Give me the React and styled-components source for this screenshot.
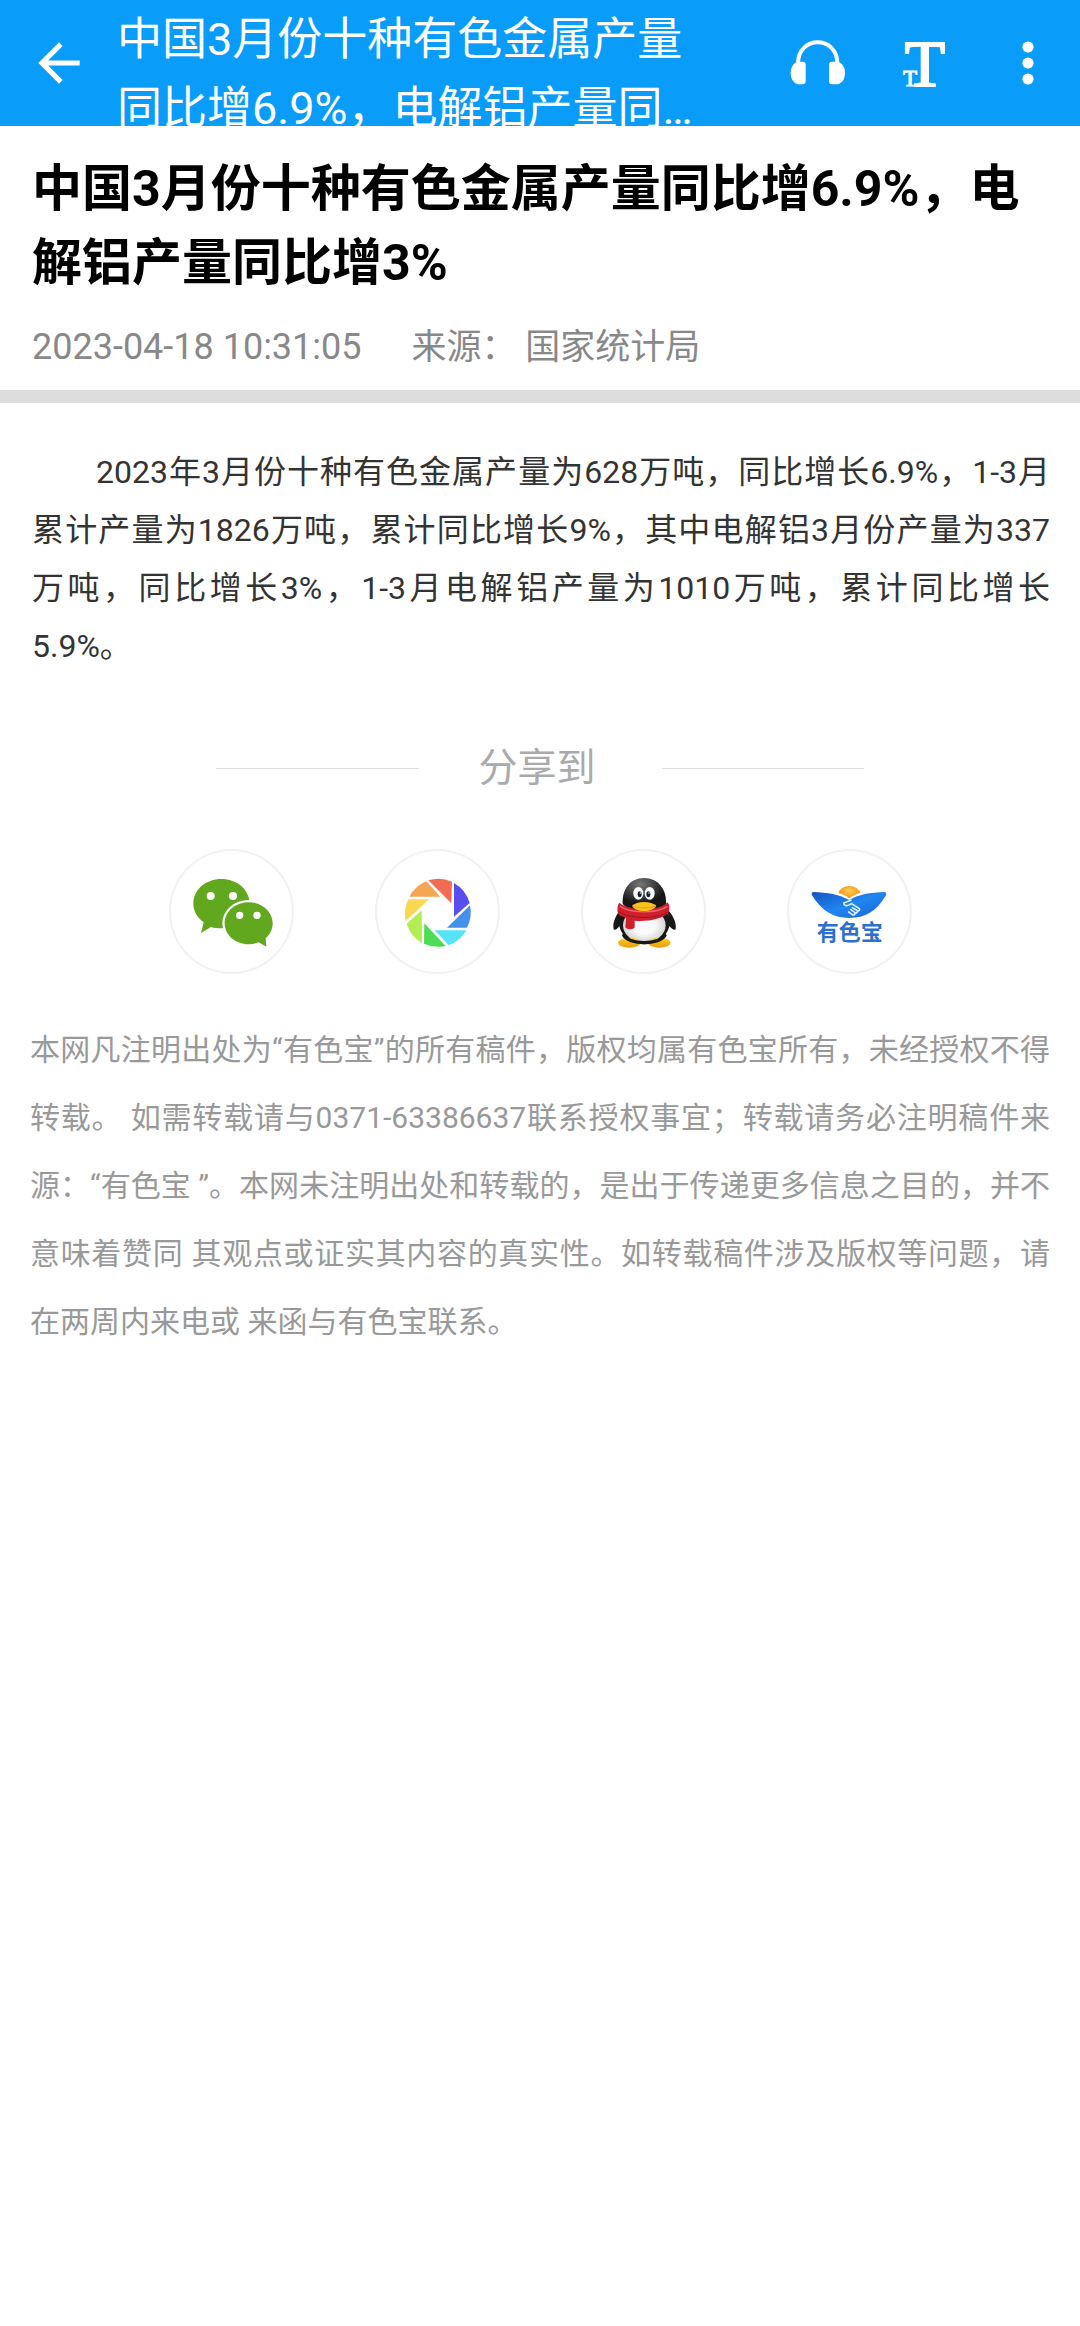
import React from "react";
import styled, { createGlobalStyle, css } from "styled-components";

const GlobalStyle = createGlobalStyle`
  body {
    margin: 0;
    background: #fff;
    font-family: Roboto, "Noto Sans CJK SC", sans-serif;
  }
`;

const Header = styled.header`
  display: flex;
  height: 126px;
  overflow: hidden;
  background: #0a9cf9;
  color: #fff;
`;

const IconButton = styled.button`
  display: flex;
  flex: none;
  align-items: center;
  justify-content: center;
  width: 105px;
  padding: 0;
  border: none;
  background: none;
  color: inherit;
  cursor: pointer;
  ${props =>
    props.$back &&
    css`
      width: 117px;
    `}
`;

const HeaderTitle = styled.div`
  flex: 1;
  align-self: flex-start;
  display: -webkit-box;
  -webkit-box-orient: vertical;
  -webkit-line-clamp: 2;
  overflow: hidden;
  margin: 5px 56px 0 0;
  font-size: 45px;
  line-height: 69px;
`;

const ArticleHead = styled.div`
  padding: 26px 30px 17px 32px;
  border-bottom: 13px solid #ddd;
`;

const Headline = styled.h1`
  margin: 0;
  color: #000;
  font-size: 50px;
  font-weight: bold;
  line-height: 74px;
`;

const Meta = styled.div`
  display: flex;
  align-items: baseline;
  gap: 50px;
  height: 52px;
  margin-top: 21px;
  color: #888;
  font-size: 35px;
  line-height: 52px;
`;

const PublishTime = styled.time`
  font-size: 36px;
`;

const Content = styled.p`
  margin: 0;
  padding: 40px 30px 0 32px;
  color: #333;
  font-size: 32px;
  line-height: 58px;
  text-align: justify;
`;

const ContentRun = styled.span`
  display: block;
  ${props =>
    props.$first &&
    css`
      text-align-last: justify;
      text-indent: 2em;
    `}
`;

const ShareTitle = styled.div`
  display: flex;
  align-items: center;
  width: 60%;
  margin: 65px auto 0;
  color: #aaa;
  font-size: 39px;
  line-height: 56px;
  &::before,
  &::after {
    content: "";
    flex: 1;
    height: 1px;
    background: #ddd;
  }
`;

const ShareLabel = styled.span`
  padding: 0 66px 0 60px;
`;

const ShareList = styled.div`
  display: flex;
  justify-content: center;
  gap: 81px;
  margin-top: 53px;
`;

const ShareButton = styled.button`
  width: 125px;
  height: 125px;
  padding: 0;
  border: none;
  border-radius: 50%;
  background: #fff;
  box-shadow: inset 0 0 0 2px #f2f0f1;
  cursor: pointer;
  svg {
    display: block;
  }
`;

const Disclaimer = styled.p`
  margin: 0;
  padding: 42px 30px 40px;
  color: #999;
  font-size: 30px;
  line-height: 68px;
  text-align: justify;
`;

const TITLE = "中国3月份十种有色金属产量同比增6.9%，电解铝产量同比增3%";

const BackIcon = () => (
  <svg width="62" height="62" viewBox="0 0 24 24" fill="currentColor">
    <path d="M20 11H7.83l5.59-5.59L12 4l-8 8 8 8 1.41-1.41L7.83 13H20v-2z" />
  </svg>
);

const HeadphonesIcon = () => (
  <svg width="56" height="46" viewBox="90 122 168 138" fill="currentColor">
    <path
      d="M114 192C114 108 232 108 232 192"
      fill="none"
      stroke="currentColor"
      strokeWidth="12"
    />
    <path d="M118 187h10q9 0 9 9v50q0 9-9 9h-10c-14 0-26-13-26-34s12-34 26-34z" />
    <path d="M229 187h-13q-9 0-9 9v50q0 9 9 9h13c14 0 26-13 26-34s-12-34-26-34z" />
  </svg>
);

const FontSizeIcon = () => (
  <svg
    width="44"
    height="50"
    viewBox="0 0 44 50"
    overflow="visible"
    fill="currentColor"
    stroke="currentColor"
    fontFamily="'Liberation Serif', serif"
  >
    <text x="24" y="48" fontSize="66" strokeWidth="2" textAnchor="middle">
      T
    </text>
    <text x="9" y="48" fontSize="23" strokeWidth="1" textAnchor="middle">
      T
    </text>
  </svg>
);

const MoreIcon = () => (
  <svg width="12" height="46" viewBox="0 0 12 46" fill="currentColor">
    <circle cx="6" cy="7" r="5.6" />
    <circle cx="6" cy="23" r="5.6" />
    <circle cx="6" cy="39" r="5.6" />
  </svg>
);

const WechatIcon = () => (
  <svg width="125" height="125" viewBox="30 24 375 375">
    <path
      fill="#62a81f"
      d="M187 114c47 0 85 32 85 74s-38 74-85 74c-11 0-21-1-31-4l-30 18 8-32c-19-14-31-34-31-56 0-42 37-74 84-74z"
    />
    <path
      fill="#62a81f"
      stroke="#fff"
      strokeWidth="14"
      paintOrder="stroke"
      d="M269 184c40 0 72 28 72 63 0 18-8 34-21 45l2 25-23-13c-9 4-19 6-30 6-40 0-72-28-72-63s32-63 72-63z"
    />
    <g fill="#fff">
      <circle cx="155" cy="165" r="12" />
      <circle cx="222" cy="165" r="12" />
      <circle cx="242" cy="223" r="11" />
      <circle cx="294" cy="223" r="11" />
    </g>
  </svg>
);

const MomentsIcon = () => (
  <svg width="125" height="125" viewBox="33 24 375 375">
    <path fill="#f26c54" d="M193 118A101 101 0 0 1 264 122L262 187Z" />
    <path fill="#5a4df0" d="M270 126A101 101 0 0 1 317 186L270 227Z" />
    <path fill="#4590ea" d="M318 193A101 101 0 0 1 309 260L249 260Z" />
    <path fill="#55e3f6" d="M307 268A101 101 0 0 1 254 313L212 268Z" />
    <path fill="#4edc55" d="M245 315A101 101 0 0 1 180 308L181 247Z" />
    <path fill="#b2ee50" d="M174 306A101 101 0 0 1 128 248L173 208Z" />
    <path fill="#f8d850" d="M125 240A101 101 0 0 1 133 175L195 175Z" />
    <path fill="#f3a653" d="M136 167A101 101 0 0 1 187 121L229 167Z" />
  </svg>
);

const QQIcon = () => (
  <svg width="125" height="125" viewBox="35 24 375 375">
    <defs>
      <radialGradient id="qqHead" cx="0.4" cy="0.2" r="0.6">
        <stop offset="0" stopColor="#777" />
        <stop offset="1" stopColor="#161616" />
      </radialGradient>
      <radialGradient id="qqBelly">
        <stop offset="0.5" stopColor="#fafafa" />
        <stop offset="1" stopColor="#d5d5d5" />
      </radialGradient>
      <linearGradient id="qqFoot" x1="0" y1="0" x2="0" y2="1">
        <stop offset="0" stopColor="#f9d31c" />
        <stop offset="1" stopColor="#eb9a12" />
      </linearGradient>
    </defs>
    <path fill="#181818" d="M152 208c-14 18-23 38-19 57 4 5 14-5 21-14zM296 208c16 16 26 38 23 57-4 5-15-4-22-13z" />
    <ellipse cx="225" cy="244" rx="76" ry="66" fill="#181818" />
    <ellipse cx="225" cy="253" rx="64" ry="51" fill="url(#qqBelly)" />
    <ellipse cx="180" cy="305" rx="34" ry="15" fill="url(#qqFoot)" />
    <ellipse cx="270" cy="305" rx="34" ry="15" fill="url(#qqFoot)" />
    <path fill="#181818" d="M162 274c12 35 112 35 126 0l4 10c-18 34-116 34-134 0z" />
    <path
      fill="url(#qqHead)"
      d="M224 111c42 0 68 34 66 76-6 26-126 26-130 0-2-42 22-76 64-76z"
    />
    <path
      fill="#cf1f2c"
      d="M150 185c26 25 122 27 144-1 8 7 8 24 2 33-22 20-66 25-100 22v20c-1 8-25 8-28 0l2-28c-12-4-20-8-24-14-3-10-2-25 4-32z"
    />
    <path fill="none" stroke="#981420" strokeWidth="3" d="M148 212c30 22 112 24 148 2" />
    <path fill="none" stroke="#ee6a70" strokeWidth="4" d="M152 196c30 22 110 22 142 0" />
    <ellipse cx="207" cy="157" rx="15" ry="19" fill="#fff" />
    <ellipse cx="241" cy="157" rx="15" ry="19" fill="#fff" />
    <ellipse cx="211" cy="160" rx="6" ry="9" fill="#14213a" />
    <ellipse cx="237" cy="160" rx="6" ry="9" fill="#14213a" />
    <circle cx="213" cy="156" r="2" fill="#fff" />
    <circle cx="239" cy="156" r="2" fill="#fff" />
    <path
      fill="#fbc31b"
      d="M188 194c8-6 20-11 36-11s29 5 37 11c-3 9-20 16-37 16s-33-7-36-16z"
    />
    <path fill="none" stroke="#d98a10" strokeWidth="2" d="M192 196c20 6 44 6 65 0" />
  </svg>
);

const YousebaoIcon = () => (
  <svg width="125" height="125" viewBox="36 24 375 375">
    <defs>
      <radialGradient id="ysbSun" cx="0.5" cy="0.4" r="0.6">
        <stop offset="0" stopColor="#ffd25a" />
        <stop offset="1" stopColor="#f48a08" />
      </radialGradient>
      <linearGradient id="ysbBoat" x1="0" y1="0" x2="1" y2="1">
        <stop offset="0" stopColor="#1454c4" />
        <stop offset="0.5" stopColor="#2086f2" />
        <stop offset="1" stopColor="#1b62d6" />
      </linearGradient>
    </defs>
    <path fill="url(#ysbSun)" d="M190 156c4-12 17-21 33-21s30 9 33 21c-14 4-24 8-33 16-9-8-20-12-33-16z" />
    <path
      fill="url(#ysbBoat)"
      d="M114 153c42 1 82 8 108 24 26-16 66-23 107-24q7 2 4 10c-28 48-62 68-110 68s-82-20-112-68q-3-8 3-10z"
    />
    <path
      fill="none"
      stroke="#d8f0ff"
      strokeWidth="5"
      strokeLinecap="round"
      strokeLinejoin="round"
      d="M228 178c-6 2-14 6-22 8 0 8 9 11 19 4l5-2 22 14c5 5-1 10-6 6l-14-8M246 208c4 6-2 10-7 6l-12-8M239 215c3 6-3 9-8 5l-10-7"
    />
    <text
      x="224"
      y="298"
      fill="#2a70cc"
      fontFamily="'Noto Sans CJK SC', sans-serif"
      fontSize="66"
      fontWeight="bold"
      textAnchor="middle"
    >
      有色宝
    </text>
  </svg>
);

const SHARE_TARGETS = [
  { name: "微信", Icon: WechatIcon },
  { name: "朋友圈", Icon: MomentsIcon },
  { name: "QQ", Icon: QQIcon },
  { name: "有色宝", Icon: YousebaoIcon }
];

const App = () => (
  <>
    <GlobalStyle />
    <Header>
      <IconButton $back aria-label="返回">
        <BackIcon />
      </IconButton>
      <HeaderTitle>{TITLE}</HeaderTitle>
      <IconButton aria-label="收听">
        <HeadphonesIcon />
      </IconButton>
      <IconButton aria-label="字体大小">
        <FontSizeIcon />
      </IconButton>
      <IconButton aria-label="更多">
        <MoreIcon />
      </IconButton>
    </Header>
    <main lang="zh-CN">
      <ArticleHead>
        <Headline>{TITLE}</Headline>
        <Meta>
          <PublishTime>2023-04-18 10:31:05</PublishTime>
          <span>来源： 国家统计局</span>
        </Meta>
      </ArticleHead>
      <Content>
        <ContentRun $first>
          2023年3月份十种有色金属产量为628万吨，同比增长6.9%，1-3月累计产量为1826万吨，累计同比增长9%，其中电解铝3月份产量为337
        </ContentRun>
        <ContentRun>
          万吨，同比增长3%，1-3月电解铝产量为1010万吨，累计同比增长5.9%。
        </ContentRun>
      </Content>
      <ShareTitle>
        <ShareLabel>分享到</ShareLabel>
      </ShareTitle>
      <ShareList>
        {SHARE_TARGETS.map(({ name, Icon }) => (
          <ShareButton key={name} aria-label={name}>
            <Icon />
          </ShareButton>
        ))}
      </ShareList>
      <Disclaimer>
        本网凡注明出处为“有色宝”的所有稿件，版权均属有色宝所有，未经授权不得转载。
        如需转载请与0371-63386637联系授权事宜；转载请务必注明稿件来源：“有色宝
        ”。本网未注明出处和转载的，是出于传递更多信息之目的，并不意味着赞同
        其观点或证实其内容的真实性。如转载稿件涉及版权等问题，请在两周内来电或
        来函与有色宝联系。
      </Disclaimer>
    </main>
  </>
);

export default App;
